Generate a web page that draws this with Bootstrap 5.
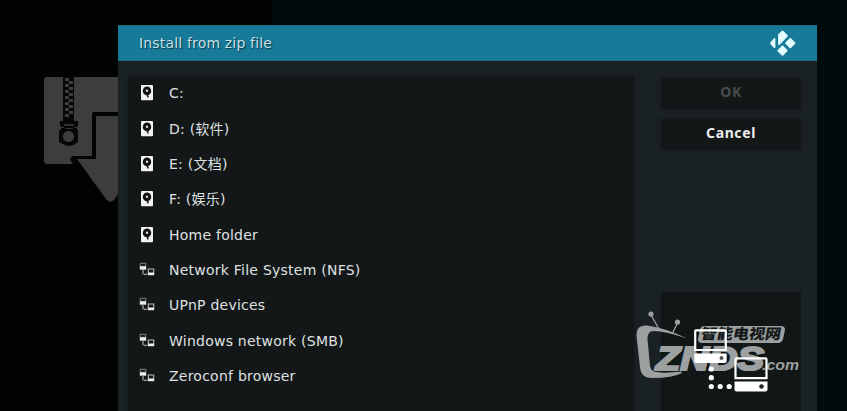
<!DOCTYPE html>
<html lang="en">
<head>
<meta charset="utf-8">
<meta name="viewport" content="width=device-width, initial-scale=1">
<title>Install from zip file</title>
<link href="https://cdn.jsdelivr.net/npm/bootstrap@5.3.0/dist/css/bootstrap.min.css" rel="stylesheet">
<style>
body{height:411px;background:linear-gradient(90deg,#010202 0,#020303 270px,#01090b 274px,#000b0e 100%);font-family:"DejaVu Sans","Noto Sans CJK SC",sans-serif;font-size:14px;color:#dfe1e1}
.stage{height:411px}
.zip-art{left:40px;top:70px}
.dialog{width:699px;height:386px;margin:25px 0 0 118px;background:#1a2123}
.dialog-head{height:36px;background:#167a98;border-top:1px solid #1b6c82;border-bottom:1px solid #1b6c82;padding:0 21px}
.dialog-head h1{font-size:14px;letter-spacing:.17px;color:#c5dfe7;text-shadow:1px 1px 1px #0a3a4a}
.files{width:506px;margin:14.6px 0 0 10px;background:#141718;box-shadow:0 0 2px #141718}
.files li{height:35.33px;padding-left:11px;gap:14px}
.files span{letter-spacing:.24px;padding-top:1px}
.side{width:140px;margin:17px 0 0 27px}
.key{height:31px;background:#141718;border:0;border-radius:1px;font-family:"Noto Sans",sans-serif;font-size:14px;letter-spacing:.6px;font-weight:700;color:#ececec;margin-bottom:9.5px;box-shadow:0 0 2px #141718}
.key:disabled{background:#141718;color:#484c4d;opacity:1}
.preview{height:119px;background:#111617}
.brand{left:630px;top:305px}
</style>
<script src="https://cdn.jsdelivr.net/npm/bootstrap@5.3.0/dist/js/bootstrap.bundle.min.js"></script>
</head>
<body class="overflow-hidden">
<svg width="0" height="0" class="position-absolute">
<symbol id="disk" viewBox="0 0 16 16"><rect x="2" y="0" width="12" height="15.2" rx="1" fill="#f2f2f2"/><ellipse cx="8" cy="5.900" rx="4.200" ry="4.400" fill="#111"/><circle cx="8" cy="5.800" r="1.200" fill="#ddd"/><path d="M8 9.200l1.200 3.200" stroke="#222" stroke-width="1.600"/></symbol>
<symbol id="net" viewBox="0 0 16 16"><path d="M1.200 1.300h5.600v3H1.200z" fill="none" stroke="#8d8f8f" stroke-width=".9"/><path d="M.8 4.300h6.400v3.400H.8z" fill="#eee"/><path d="M4 7.500v4.800M4.800 12.400h3" stroke="#aaa" stroke-width="1.200"/><path d="M9.300 7h5.400v4H9.300z" fill="none" stroke="#bbb" stroke-width="1.100"/><path d="M8.800 10.800h6.400v2.400H8.800z" fill="#eee"/></symbol>
</svg>
<main class="stage position-relative overflow-hidden">
<svg class="zip-art position-absolute" width="78" height="136" viewBox="40 70 78 136" aria-hidden="true">
<path d="M47 77h71v87H47q-3-0-3-3V80q0-3 3-3z" fill="#3d3d3d"/>
<path d="M118 112H94q-2 0-2 2v42H73q-4 1-2 5l3 5h44z" fill="#020404"/>
<path d="M118 116H96v43H77l29 40q4 5 8 1l4-6z" fill="#3d3d3d"/>
<path d="M63 77h11v45H63z" fill="#050606"/>
<path d="M65 78h4v3h-4zM69 81h4v3h-4zM65 84h4v3h-4zM69 87h4v3h-4zM65 90h4v3h-4zM69 93h4v3h-4zM65 96h4v3h-4zM69 99h4v3h-4zM65 102h4v3h-4zM69 105h4v3h-4zM65 108h4v3h-4zM69 111h4v3h-4zM65 114h4v3h-4z" fill="#3d3d3d"/>
<path d="M60 121h18v5h-1v3l1 2v11l-3 2q-6 4-12 0l-4-2v-11l2-2v-3h-1z" fill="#050606"/>
<path d="M64 124h10v2H64zM65 128h8v1h-8z" fill="#303030"/>
<circle cx="68.500" cy="136.500" r="5.600" fill="#3d3d3d"/><path d="M60 127.500h4M74 127.500h4" stroke="#353535"/>
</svg>
<section class="dialog d-flex flex-column">
<header class="dialog-head d-flex align-items-center justify-content-between flex-shrink-0">
<h1 class="m-0 fw-normal">Install from zip file</h1>
<svg width="26" height="26" viewBox="0 0 26 26" fill="#e3fdff" stroke="#e3fdff" stroke-width="1.800" stroke-linejoin="round"><path d="M12.500 1.400l4.500 4.400-8 8.400V5zM4.500 9v8.200L.9 13.100zM20.300 9l4.200 4.200-4.200 4.200-4.200-4.200zM12.500 16.500l4.200 4.200-4.200 4.200-4.200-4.200z"/></svg>
</header>
<div class="d-flex flex-grow-1">
<ul class="files list-unstyled mb-0">
<li class="d-flex align-items-center"><svg width="16" height="16"><use href="#disk"/></svg><span>C:</span></li>
<li class="d-flex align-items-center"><svg width="16" height="16"><use href="#disk"/></svg><span>D: (软件)</span></li>
<li class="d-flex align-items-center"><svg width="16" height="16"><use href="#disk"/></svg><span>E: (文档)</span></li>
<li class="d-flex align-items-center"><svg width="16" height="16"><use href="#disk"/></svg><span>F: (娱乐)</span></li>
<li class="d-flex align-items-center"><svg width="16" height="16"><use href="#disk"/></svg><span>Home folder</span></li>
<li class="d-flex align-items-center"><svg width="16" height="16"><use href="#net"/></svg><span>Network File System (NFS)</span></li>
<li class="d-flex align-items-center"><svg width="16" height="16"><use href="#net"/></svg><span>UPnP devices</span></li>
<li class="d-flex align-items-center"><svg width="16" height="16"><use href="#net"/></svg><span>Windows network (SMB)</span></li>
<li class="d-flex align-items-center"><svg width="16" height="16"><use href="#net"/></svg><span>Zeroconf browser</span></li>
</ul>
<aside class="side d-flex flex-column">
<button class="key w-100 px-0 pt-0 pb-1" disabled>OK</button>
<button class="key w-100 px-0 pt-0 pb-1">Cancel</button>
<div class="preview mt-auto"></div>
</aside>
</div>
</section>
<svg class="brand position-absolute" width="175" height="106" viewBox="630 305 175 106">
<g fill="#9da0a0">
<path d="M687 338.500Q666 328 647 325.500q-11-1-10.500 10l3.500 32q1 11 12 10.500 21 0 30-5l-1-1.500q-16 2-24 .5-6 0-7-6l-2.500-27q0-8 6-8 12 0 33.500 7.500z"/>
<circle cx="651" cy="314" r="2.600"/><circle cx="677.500" cy="322" r="2.600"/>
<path d="M651 315l8 14M677.500 323l-5 10" stroke="#9da0a0" stroke-width="1.300"/>
<path d="M704 326h77q4 0 4 4l-2 9q-1 4-5 4h-76q-4 0-4-4l2-9q1-4 4-4z"/>
<text x="656" y="369.500" font-family="Liberation Sans,sans-serif" font-size="34" font-weight="700" font-style="italic" textLength="108" lengthAdjust="spacingAndGlyphs" stroke="#9da0a0" stroke-width="2.200">ZNDS</text>
<text x="762" y="370" font-family="Liberation Sans,sans-serif" font-size="15.500" font-weight="700" font-style="italic" textLength="37" lengthAdjust="spacingAndGlyphs">.com</text>
</g>
<text x="701" y="339.500" font-family="Noto Sans CJK SC,sans-serif" font-size="14.500" font-weight="900" fill="#15191a" textLength="80" lengthAdjust="spacingAndGlyphs" transform="translate(59 0) skewX(-10)">智能电视网</text>
<path d="M696 330.300h29q.800 0 .800.800V350h-30.600v-18.900q0-.8.800-.8zM736.500 358.400h29q1 0 1 1v18.800h-31v-18.800q0-1 1-1z" fill="none" stroke="#fff" stroke-width="2.200"/>
<g fill="#fff"><path d="M694.300 353.500h32.400v7.500q0 2-2 2h-28.400q-2 0-2-2z"/><circle cx="721.500" cy="358" r="2" fill="#555"/>
<path d="M734.500 381.500h33v8q0 2-2 2h-29q-2 0-2-2z"/><circle cx="761.500" cy="386.500" r="2.300" fill="#222"/>
<circle cx="711.300" cy="369" r="2.600"/><circle cx="711.300" cy="377.700" r="2.600"/><circle cx="711.300" cy="386.500" r="2.600"/><circle cx="720.200" cy="386.500" r="2.600"/><circle cx="729.200" cy="386.500" r="2.600"/></g>
</svg>
</main>
</body>
</html>
